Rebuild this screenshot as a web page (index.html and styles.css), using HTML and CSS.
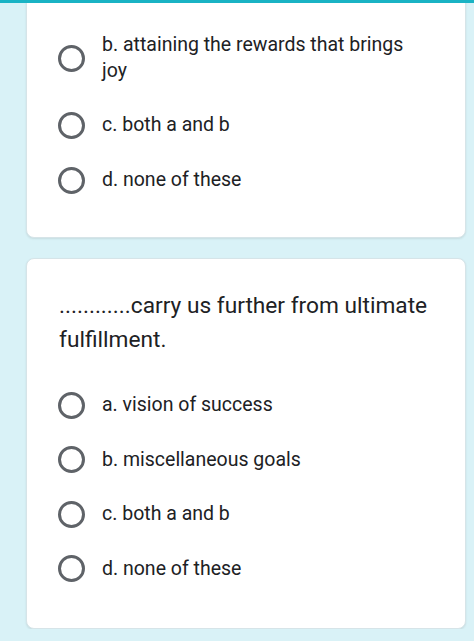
FILE: index.html
```html
<!DOCTYPE html>
<html lang="en">
<head>
<meta charset="utf-8">
<title>Quiz</title>
<link rel="stylesheet" href="styles.css">
</head>
<body>
<div class="topbar"></div>
<main class="page">
  <section class="card card-first">
    <ul class="options">
      <li class="option"><span class="radio"></span><span class="label">a. achieving the goals that brings<br>joy</span></li>
      <li class="option"><span class="radio"></span><span class="label">b. attaining the rewards that brings joy</span></li>
      <li class="option"><span class="radio"></span><span class="label">c. both a and b</span></li>
      <li class="option"><span class="radio"></span><span class="label">d. none of these</span></li>
    </ul>
  </section>
  <section class="card card-second">
    <p class="question">............carry us further from ultimate fulfillment.</p>
    <ul class="options">
      <li class="option"><span class="radio"></span><span class="label">a. vision of success</span></li>
      <li class="option"><span class="radio"></span><span class="label">b. miscellaneous goals</span></li>
      <li class="option"><span class="radio"></span><span class="label">c. both a and b</span></li>
      <li class="option"><span class="radio"></span><span class="label">d. none of these</span></li>
    </ul>
  </section>
</main>
</body>
</html>
```

FILE: styles.css
```css
html, body {
  margin: 0;
  padding: 0;
}

body {
  background: #d9f2f7;
  overflow: hidden;
  font-family: Roboto, "Liberation Sans", sans-serif;
  color: #202124;
}

.topbar {
  position: fixed;
  top: 0;
  left: 0;
  right: 0;
  height: 3px;
  background: #19b3c4;
  z-index: 5;
}

.page {
  display: flex;
  flex-direction: column;
  gap: 20px;
  margin-top: -86px;
  padding: 0 8px 0 26px;
}

.card {
  background: #ffffff;
  border: 1px solid #d6e4e8;
  border-radius: 8px;
  box-shadow: 0 1px 2px rgba(60, 64, 67, 0.12);
  padding: 0 28px 0 31px;
}

.card-first {
  padding-top: 24px;
  padding-bottom: 29.5px;
}

.card-second {
  padding-top: 30px;
  padding-bottom: 31.5px;
}

.question {
  margin: 0 0 21px 1px;
  font-size: 22.7px;
  line-height: 34px;
  color: #202124;
}

.options {
  list-style: none;
  margin: 0;
  padding: 0 12px 0 0;
}

.option {
  display: flex;
  align-items: center;
  gap: 17px;
  padding: 13.8px 0;
}

.radio {
  flex: none;
  width: 27px;
  height: 27px;
  box-sizing: border-box;
  border: 3px solid #5f6368;
  border-radius: 50%;
}

.label {
  font-size: 19.5px;
  line-height: 26px;
  color: #202124;
}
```
